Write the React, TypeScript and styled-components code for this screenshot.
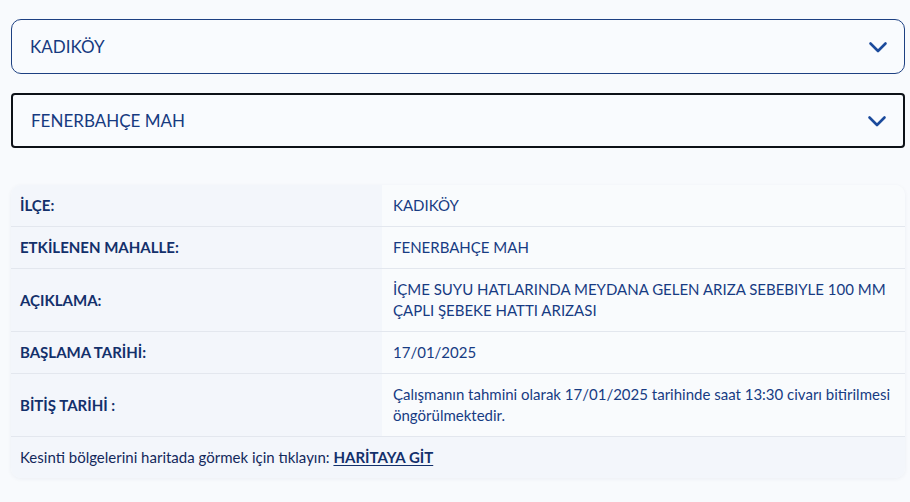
import { Fragment } from 'react';
import styled, { createGlobalStyle } from 'styled-components';

const GlobalStyle = createGlobalStyle`
  html, body {
    margin: 0;
    padding: 0;
    background: #f8fafd;
    font-family: Lato, 'Noto Sans', sans-serif;
  }
`;

const S = {
  Page: styled.div`
    display: flex;
    flex-direction: column;
    padding: 19px 5px 24px 11px;
    gap: 19px;
  `,

  Select: styled.div<{ $active?: boolean }>`
    display: flex;
    align-items: center;
    justify-content: space-between;
    box-sizing: border-box;
    height: 55px;
    padding: 0 16px 0 18px;
    background: #f9fbfe;
    border: ${({ $active }) => ($active ? '2px solid #0d1117' : '1px solid #1d4082')};
    border-radius: ${({ $active }) => ($active ? '4px' : '10px')};
    color: #163a80;
    font-size: 17px;
  `,

  Table: styled.div`
    margin-top: 18px;
    display: grid;
    grid-template-columns: 371px 1fr;
    border-radius: 10px;
    overflow: hidden;
    box-shadow: 0 1px 4px rgba(30, 50, 90, 0.06);
    background: #f9fbfd;
  `,

  Label: styled.div`
    display: flex;
    align-items: center;
    padding: 10px 9px;
    background: #f3f6fb;
    border-bottom: 1px solid #e3e7ee;
    color: #13306b;
    font-size: 15px;
    font-weight: 700;
    line-height: 21px;
  `,

  Value: styled.div`
    display: flex;
    align-items: center;
    padding: 10px 11px;
    background: #f9fbfd;
    border-bottom: 1px solid #e3e7ee;
    color: #173b83;
    font-size: 15px;
    line-height: 21px;
  `,

  Footer: styled.div`
    grid-column: 1 / -1;
    padding: 10px 9px;
    background: #f3f6fb;
    color: #13295b;
    font-size: 15px;
    line-height: 21px;
  `,

  MapLink: styled.a`
    color: #13306b;
    font-weight: 700;
    text-decoration: underline;
    text-underline-offset: 2px;
  `,
};

const Chevron = () => (
  <svg width='20' height='20' viewBox='0 0 20 20' fill='none' stroke='#1b4a9c' strokeWidth='2.6' strokeLinecap='round' strokeLinejoin='round'>
    <path d='M2.5 6.5l7.5 7.5 7.5-7.5' />
  </svg>
);

const rows = [
  { label: 'İLÇE:', value: 'KADIKÖY' },
  { label: 'ETKİLENEN MAHALLE:', value: 'FENERBAHÇE MAH' },
  { label: 'AÇIKLAMA:', value: 'İÇME SUYU HATLARINDA MEYDANA GELEN ARIZA SEBEBIYLE 100 MM ÇAPLI ŞEBEKE HATTI ARIZASI' },
  { label: 'BAŞLAMA TARİHİ:', value: '17/01/2025' },
  {
    label: 'BİTİŞ TARİHİ :',
    value: 'Çalışmanın tahmini olarak 17/01/2025 tarihinde saat 13:30 civarı bitirilmesi öngörülmektedir.',
  },
];

const App = () => {
  return (
    <>
      <GlobalStyle />
      <S.Page>
        <S.Select>
          <span>KADIKÖY</span>
          <Chevron />
        </S.Select>
        <S.Select $active>
          <span>FENERBAHÇE MAH</span>
          <Chevron />
        </S.Select>
        <S.Table>
          {rows.map((row) => (
            <Fragment key={row.label}>
              <S.Label>{row.label}</S.Label>
              <S.Value>{row.value}</S.Value>
            </Fragment>
          ))}
          <S.Footer>
            Kesinti bölgelerini haritada görmek için tıklayın: <S.MapLink href='#'>HARİTAYA GİT</S.MapLink>
          </S.Footer>
        </S.Table>
      </S.Page>
    </>
  );
};

export default App;
